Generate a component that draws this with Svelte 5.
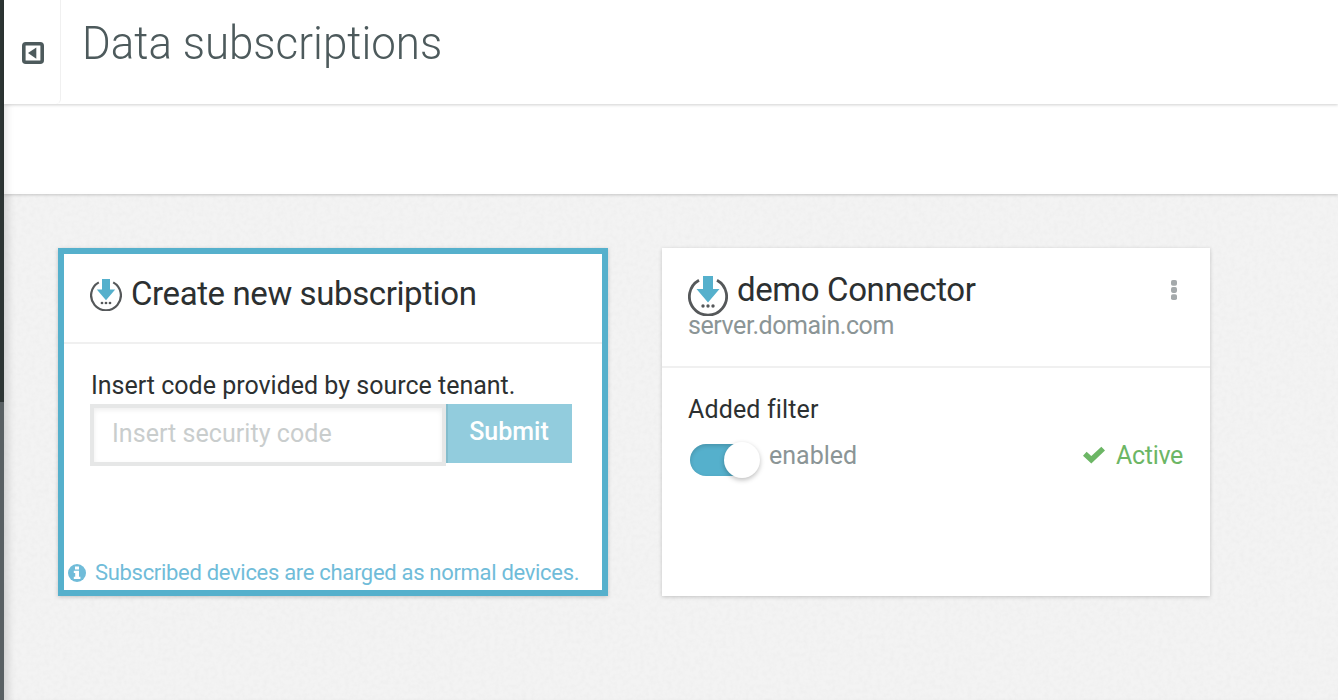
<script>
  let enabled = $state(true);
  let code = $state('');
</script>

{#snippet connector(size)}
  <svg class="connector" width={size} height={size} viewBox="0 0 40 40">
    <path d="M11 4.2A18.6 18.6 0 1 0 29 4.2" fill="none" stroke="#55585a" stroke-width="2.8" />
    <path d="M15 0h10v13h6.5L20 26.5 8.5 13H15z" fill="#55b0cc" />
    <circle cx="15" cy="30" r="1.7" fill="#55585a" />
    <circle cx="20" cy="30" r="1.7" fill="#55585a" />
    <circle cx="25" cy="30" r="1.7" fill="#55585a" />
  </svg>
{/snippet}

<div class="app">
  <aside class="rail"></aside>
  <div class="page">
    <header class="top">
      <button class="collapse" aria-label="Collapse">
        <svg width="22" height="22" viewBox="0 0 22 22">
          <rect x="1.8" y="1.8" width="18.4" height="18.4" rx="2" fill="none" stroke="#4d5a5c" stroke-width="3.6" />
          <path d="M14.3 5.4v11.4L6 11.1z" fill="#4d5a5c" />
        </svg>
      </button>
      <h1>Data subscriptions</h1>
    </header>
    <div class="toolbar"></div>
    <main>
      <svg class="grain" width="100%" height="100%">
        <filter id="paper">
          <feTurbulence type="fractalNoise" baseFrequency="0.22" numOctaves="3" seed="4" />
          <feColorMatrix values="0 0 0 0 0.5  0 0 0 0 0.5  0 0 0 0 0.5  0.14 0 0 0 -0.05" />
        </filter>
        <rect width="100%" height="100%" filter="url(#paper)" />
      </svg>
      <section class="card create">
        <div class="head">
          {@render connector(32)}
          <h2>Create new subscription</h2>
        </div>
        <div class="body">
          <label for="code">Insert code provided by source tenant.</label>
          <div class="group">
            <input id="code" placeholder="Insert security code" bind:value={code} />
            <button class="submit">Submit</button>
          </div>
        </div>
        <p class="note">
          <svg width="18" height="18" viewBox="0 0 18 18">
            <circle cx="9" cy="9" r="9" fill="#70bcd9" />
            <path d="M7 2.4h4v3H7zM5.8 6.8h5.2v5.9h1.4v2.2H5.8v-2.2h1.4V9H5.8z" fill="#fff" />
          </svg>
          <span>Subscribed devices are charged as normal devices.</span>
        </p>
      </section>
      <section class="card item">
        <div class="head">
          <div class="title">
            {@render connector(40)}
            <h2>demo Connector</h2>
            <button class="more" aria-label="More">
              <svg width="6" height="20" viewBox="0 0 6 20" fill="#a4a9ab">
                <rect width="6" height="5.8" rx="1.8" />
                <rect y="7.1" width="6" height="5.8" rx="1.8" />
                <rect y="14.2" width="6" height="5.8" rx="1.8" />
              </svg>
            </button>
          </div>
          <div class="server"><span>server.domain.com</span></div>
        </div>
        <div class="body">
          <div class="filter"><span>Added filter</span></div>
          <div class="status">
            <button class="toggle" class:on={enabled} aria-label="Toggle" onclick={() => (enabled = !enabled)}><i></i></button>
            <span class="state">enabled</span>
            <svg class="check" width="22" height="18" viewBox="0 0 22 18">
              <path d="M1.8 7.8 8.3 13.8 20.2 2.6" fill="none" stroke="#6cb665" stroke-width="5.4" />
            </svg>
            <span class="active">Active</span>
          </div>
        </div>
      </section>
    </main>
  </div>
</div>

<style>
  .app { display: flex; height: 700px; overflow: hidden; background: #fff; font-family: Roboto, "Liberation Sans", sans-serif; color: #2c3031; font-size: 25px; }
  .app * { box-sizing: border-box; }
  button { border: 0; padding: 0; background: none; font: inherit; }
  h1, h2, p { margin: 0; font-weight: 400; white-space: nowrap; }
  span, label { white-space: nowrap; }
  svg { display: block; flex: none; }
  .rail { width: 4px; flex: none; background: linear-gradient(#2d3534 402px, #596063 402px); }
  .page { flex: 1; display: flex; flex-direction: column; min-width: 0; }
  .top { height: 104px; display: flex; background: #fff; position: relative; z-index: 2; box-shadow: 0 1px 3px rgba(0, 0, 0, 0.18); }
  .collapse { width: 57px; height: 104px; border-right: 1px solid #f0f0f0; border-radius: 0 0 5px 0; padding: 1px 0 0 18px; display: flex; align-items: center; }
  h1 { font-size: 47px; font-weight: 300; line-height: 86px; color: #4d5a5c; margin-left: 21px; transform: scaleX(0.934); transform-origin: left; }
  .toolbar { height: 90px; flex: none; position: relative; z-index: 1; background: #fff; box-shadow: 0 1px 3px rgba(0, 0, 0, 0.18), inset 8px 0 8px -6px rgba(0, 0, 0, 0.12); }
  main { flex: 1; position: relative; background: #f3f3f3; display: flex; align-items: flex-start; gap: 54px; padding: 54px 0 0 54px; box-shadow: inset 10px 0 9px -6px rgba(0, 0, 0, 0.14); }
  .grain { position: absolute; inset: 0; }
  .card { position: relative; height: 348px; background: #fff; box-shadow: 0 1px 4px rgba(0, 0, 0, 0.2); display: flex; flex-direction: column; }
  h2 { font-size: 33px; line-height: 40px; letter-spacing: -0.4px; }
  .create { width: 550px; border: 6px solid #55b0cc; }
  .create .head { height: 90px; border-bottom: 2px solid #f0f0f0; display: flex; padding: 20px 0 0 26px; }
  .create .connector { margin: 5px 9px 0 0; }
  .create .body { padding: 27px 0 0 26px; }
  label { display: block; line-height: 30px; height: 33px; padding-left: 1px; }
  .group { display: flex; align-items: flex-start; }
  input { width: 356px; height: 62px; border: 4px solid #e6e7e7; padding: 0 18px 3px; font: inherit; letter-spacing: 0.05px; outline: none; border-radius: 0; box-shadow: inset 0 2px 5px rgba(0, 0, 0, 0.07); }
  input::placeholder { color: #c9cdcd; opacity: 1; }
  .submit { width: 126px; height: 59px; padding: 0 2px 4px 0; background: #92ccdd; border-left: 2px solid #83bccc; color: #fff; font-weight: 500; }
  .note { margin-top: auto; display: flex; align-items: center; height: 35px; padding-left: 4px; font-size: 22px; letter-spacing: -0.31px; color: #70bcd9; }
  .note span { margin-left: 9px; }
  .item { width: 548px; }
  .item .head { height: 120px; border-bottom: 2px solid #f0f0f0; padding: 21px 26px 0; }
  .title { display: flex; height: 42px; }
  .title h2 { padding-top: 1px; }
  .title .connector { margin: 7px 9px 0 0; }
  .more { margin: 11px 7px 0 auto; height: 20px; }
  .server { line-height: 30px; color: #8b9596; letter-spacing: -0.43px; }
  .item .body { padding: 27px 26px 0; }
  .filter { line-height: 30px; letter-spacing: 0.15px; }
  .status { display: flex; align-items: flex-start; line-height: 30px; padding-top: 16px; }
  .toggle { width: 68px; height: 32px; margin: 3px 0 0 2px; border-radius: 16px; background: #bcc2c3; position: relative; box-shadow: inset 0 2px 4px rgba(0, 0, 0, 0.16); }
  .toggle.on { background: #55b0cc; }
  .toggle i { position: absolute; left: 0; top: -2px; width: 36px; height: 36px; border-radius: 50%; background: #fff; box-shadow: 0 2px 5px rgba(0, 0, 0, 0.26); }
  .toggle.on i { left: 34px; }
  .state { color: #8b9596; margin-left: 11px; }
  .check { margin: 5px 11px 0 auto; }
  .active { color: #6cb665; width: 68px; letter-spacing: -0.3px; }
</style>
